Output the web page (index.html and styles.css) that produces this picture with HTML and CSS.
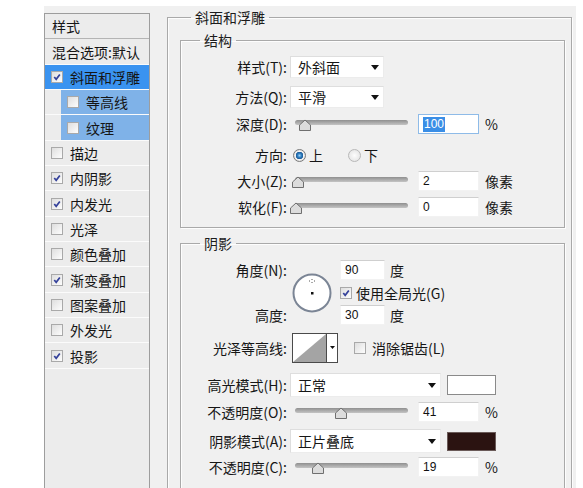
FILE: index.html
```html
<!DOCTYPE html>
<html lang="zh">
<head>
<meta charset="utf-8">
<link rel="stylesheet" href="styles.css">
</head>
<body>
<div class="dialog">
  <div class="styles-list">
    <div class="row head">样式</div>
    <div class="row blend">混合选项:默认</div>
    <div class="row item selected"><span class="cb checked"><svg viewBox="0 0 11 11"><path d="M2.5 5.5 L4.6 8 L8.6 2.8"/></svg></span>斜面和浮雕</div>
    <div class="row sub"><div class="subhl"><span class="cb"></span>等高线</div></div>
    <div class="row sub"><div class="subhl"><span class="cb"></span>纹理</div></div>
    <div class="row item"><span class="cb"></span>描边</div>
    <div class="row item"><span class="cb checked"><svg viewBox="0 0 11 11"><path d="M2.5 5.5 L4.6 8 L8.6 2.8"/></svg></span>内阴影</div>
    <div class="row item"><span class="cb checked"><svg viewBox="0 0 11 11"><path d="M2.5 5.5 L4.6 8 L8.6 2.8"/></svg></span>内发光</div>
    <div class="row item"><span class="cb"></span>光泽</div>
    <div class="row item"><span class="cb"></span>颜色叠加</div>
    <div class="row item"><span class="cb checked"><svg viewBox="0 0 11 11"><path d="M2.5 5.5 L4.6 8 L8.6 2.8"/></svg></span>渐变叠加</div>
    <div class="row item"><span class="cb"></span>图案叠加</div>
    <div class="row item"><span class="cb"></span>外发光</div>
    <div class="row item"><span class="cb checked"><svg viewBox="0 0 11 11"><path d="M2.5 5.5 L4.6 8 L8.6 2.8"/></svg></span>投影</div>
  </div>

  <div class="main">
    <fieldset class="group outer">
      <legend>斜面和浮雕</legend>

      <fieldset class="group inner structure">
        <legend>结构</legend>
        <div class="frow r-select first">
          <span class="lbl">样式(T):</span>
          <div class="select w-small"><span>外斜面</span><i class="arrow"></i></div>
        </div>
        <div class="frow r-select gap8">
          <span class="lbl">方法(Q):</span>
          <div class="select w-small"><span>平滑</span><i class="arrow"></i></div>
        </div>
        <div class="frow gap6">
          <span class="lbl">深度(D):</span>
          <div class="slider"><div class="track"></div><svg class="thumb" style="left:8px" viewBox="0 0 14 13"><path d="M1.5 6 L7 1 L12.5 6 L12.5 11.5 L1.5 11.5 Z"/></svg></div>
          <div class="num focused"><span class="sel">100</span></div>
          <span class="unit">%</span>
        </div>
        <div class="frow gap11">
          <span class="lbl">方向:</span>
          <span class="radio on"></span><span class="ropt">上</span>
          <span class="radio off"></span><span class="ropt">下</span>
        </div>
        <div class="frow gap6">
          <span class="lbl">大小(Z):</span>
          <div class="slider"><div class="track"></div><svg class="thumb" style="left:1px" viewBox="0 0 14 13"><path d="M1.5 6 L7 1 L12.5 6 L12.5 11.5 L1.5 11.5 Z"/></svg></div>
          <div class="num">2</div>
          <span class="unit">像素</span>
        </div>
        <div class="frow gap6">
          <span class="lbl">软化(F):</span>
          <div class="slider"><div class="track"></div><svg class="thumb" style="left:-1px" viewBox="0 0 14 13"><path d="M1.5 6 L7 1 L12.5 6 L12.5 11.5 L1.5 11.5 Z"/></svg></div>
          <div class="num">0</div>
          <span class="unit">像素</span>
        </div>
      </fieldset>

      <fieldset class="group inner shadow">
        <legend>阴影</legend>
        <div class="angle-grid">
          <span class="lbl g-l1">角度(N):</span>
          <svg class="dial" viewBox="0 0 40 40">
            <circle cx="20" cy="20" r="18.5" fill="#fff" stroke="#7b8595" stroke-width="2"/>
            <path d="M20 6 V7 M20 9 V10 M17 8 H18 M22 8 H23" stroke="#555" stroke-width="1"/>
            <rect x="19" y="19" width="2.5" height="2.5" fill="#111"/>
          </svg>
          <div class="g-r1"><div class="num short">90</div><span class="unit u5">度</span></div>
          <div class="g-r2"><span class="cb checked"><svg viewBox="0 0 11 11"><path d="M2.5 5.5 L4.6 8 L8.6 2.8"/></svg></span><span class="cbl">使用全局光(G)</span></div>
          <span class="lbl g-l3">高度:</span>
          <div class="g-r3"><div class="num short">30</div><span class="unit u5">度</span></div>
        </div>
        <div class="frow contour-row">
          <span class="lbl">光泽等高线:</span>
          <svg class="contour" viewBox="0 0 46 30">
            <rect x="0.5" y="0.5" width="45" height="29" fill="#fff" stroke="#4a4a4a"/>
            <polygon points="1,29 34,1 34,29" fill="#a4a4a4"/>
            <line x1="34.5" y1="1" x2="34.5" y2="29" stroke="#4a4a4a"/>
            <polygon points="38,13 43,13 40.5,16" fill="#111"/>
          </svg>
          <span class="cb aa"></span><span class="cbl">消除锯齿(L)</span>
        </div>
        <div class="frow r-mode gap10">
          <span class="lbl">高光模式(H):</span>
          <div class="select w-wide"><span>正常</span><i class="arrow"></i></div>
          <div class="swatch white"></div>
        </div>
        <div class="frow gap5">
          <span class="lbl">不透明度(O):</span>
          <div class="slider"><div class="track"></div><svg class="thumb" style="left:44px" viewBox="0 0 14 13"><path d="M1.5 6 L7 1 L12.5 6 L12.5 11.5 L1.5 11.5 Z"/></svg></div>
          <div class="num">41</div>
          <span class="unit">%</span>
        </div>
        <div class="frow r-mode gap7">
          <span class="lbl">阴影模式(A):</span>
          <div class="select w-wide"><span>正片叠底</span><i class="arrow"></i></div>
          <div class="swatch dark"></div>
        </div>
        <div class="frow gap4">
          <span class="lbl">不透明度(C):</span>
          <div class="slider"><div class="track"></div><svg class="thumb" style="left:21px" viewBox="0 0 14 13"><path d="M1.5 6 L7 1 L12.5 6 L12.5 11.5 L1.5 11.5 Z"/></svg></div>
          <div class="num">19</div>
          <span class="unit">%</span>
        </div>
      </fieldset>
    </fieldset>
  </div>
</div>
</body>
</html>
```

FILE: styles.css
```css
* { box-sizing: border-box; }

body {
  margin: 0;
  background: #ffffff;
  font-family: "Noto Sans CJK SC", "Noto Sans", sans-serif;
  font-size: 14px;
  color: #161616;
}

.dialog {
  display: flex;
  margin: 6px 0 0 44px;
  width: 532px;
  height: 482px;
  background: #f0f0f0;
  overflow: hidden;
}

/* ---------- left list ---------- */
.styles-list {
  flex: none;
  margin-top: 7px;
  width: 106px;
  height: 520px;
  border: 1px solid #9d9d9d;
  background: #ececec;
}

.row {
  display: flex;
  align-items: center;
  height: 25.35px;
  border-bottom: 1px solid #fbfbfb;
  line-height: 16px;
  white-space: nowrap;
}

.head { padding-left: 7px; border-bottom-color: #b4b4b4; }
.blend { padding-left: 7px; }
.item { padding-left: 6px; }
.selected { background: #3a93f0; }

.sub { padding-left: 16px; align-items: stretch; }
.subhl {
  flex: 1;
  display: flex;
  align-items: center;
  padding-left: 6px;
  background: #7fb2e8;
}

.cb {
  flex: none;
  display: inline-block;
  width: 12px;
  height: 12px;
  margin-right: 7px;
  border: 1px solid #a9a9a9;
  background: linear-gradient(135deg, #dedede, #fdfdfd);
}
.cb svg { display: block; width: 10px; height: 10px; }
.cb svg path { fill: none; stroke: #34419a; stroke-width: 1.9; }

/* ---------- right side ---------- */
.main {
  flex: 1;
  padding-left: 17px;
}

fieldset.group {
  margin: 0;
  padding: 0;
  min-width: 0;
  border: 1px solid #a9a9a9;
  box-shadow: inset 1px 1px 0 #fdfdfd, 1px 1px 0 #fdfdfd;
}

fieldset.group > legend {
  padding: 0 4px;
  line-height: 16px;
  font-size: 14px;
  color: #1c1c1c;
}

.outer {
  margin-top: 3px !important;
  width: 405px;
  height: 520px;
  border-bottom: none !important;
  padding: 0 6px 0 12px !important;
}
.outer > legend { margin-left: 11px; }

.inner { margin-top: 7px !important; }
.inner > legend { margin-left: 19px; }

.structure { padding: 8px 0 10px 0 !important; }

.shadow {
  height: 300px;
  border-bottom: none !important;
  padding-top: 9px !important;
}

.frow {
  display: flex;
  align-items: center;
  height: 20px;
  white-space: nowrap;
}
.r-select { height: 22px; }
.r-mode { height: 24px; }

.gap4 { margin-top: 4px; }
.gap5 { margin-top: 5px; }
.gap6 { margin-top: 6px; }
.gap7 { margin-top: 7px; }
.gap8 { margin-top: 8px; }
.gap10 { margin-top: 10px; }
.gap11 { margin-top: 11px; }

.lbl {
  flex: none;
  width: 106px;
  margin-right: 3px;
  text-align: right;
  line-height: 16px;
}

/* dropdown */
.select {
  position: relative;
  display: flex;
  align-items: center;
  height: 100%;
  padding-left: 7px;
  background: #ffffff;
  border: 1px solid #dedede;
  border-right-color: #ececec;
  border-bottom-color: #ececec;
}
.w-small { width: 94px; }
.w-wide { width: 151px; }
.arrow {
  position: absolute;
  right: 4px;
  top: 50%;
  margin-top: -2px;
  width: 0;
  height: 0;
  border-left: 4px solid transparent;
  border-right: 4px solid transparent;
  border-top: 5px solid #111;
}

/* slider */
.slider {
  position: relative;
  flex: none;
  width: 122px;
  height: 20px;
}
.track {
  position: absolute;
  left: 5px;
  top: 6px;
  width: 113px;
  height: 5px;
  border-radius: 3px;
  background: linear-gradient(#8f8f8f, #c4c4c4);
}
.thumb {
  position: absolute;
  top: 5px;
  width: 14px;
  height: 13px;
}
.thumb path { fill: #dcdcdc; stroke: #6f6f6f; stroke-width: 1; }

/* number input */
.num {
  flex: none;
  display: flex;
  align-items: center;
  width: 61px;
  height: 20px;
  margin-left: 6px;
  padding-left: 4px;
  background: #ffffff;
  border: 1px solid #f2f2f2;
  border-top-color: #cfcfcf;
  font-family: "Liberation Sans", Arial, sans-serif;
  font-size: 12px;
  color: #111;
}
.num.focused { border: 1px solid #8ebbe8; }
.num .sel {
  background: #3a8ee6;
  color: #ffffff;
  padding: 0 1px;
  line-height: 15px;
}
.num.short { width: 45px; margin-left: 0; }

.unit {
  margin-left: 6px;
  line-height: 16px;
}
.unit.u5 { margin-left: 5px; }

/* radio */
.radio {
  flex: none;
  display: inline-block;
  width: 13px;
  height: 13px;
  border-radius: 50%;
  margin-left: 3px;
}
.radio.on {
  border: 1px solid #7a7a7a;
  background: radial-gradient(circle, #9fd0f5 0, #2f7fc0 2px, #1c5a98 3.5px, #f4f4f4 4px, #dadada 6px);
}
.radio.off {
  margin-left: 25px;
  border: 1px solid #b8b8b8;
  background: radial-gradient(circle, #fdfdfd 0, #e6e6e6 6px);
}
.ropt { margin-left: 3px; line-height: 16px; }

/* angle */
.angle-grid {
  display: grid;
  grid-template-columns: 106px 47px auto;
  grid-template-rows: 20px 25px 20px;
  column-gap: 3px;
  align-items: center;
}
.angle-grid .lbl { margin-right: 0; }
.g-l1 { grid-column: 1; grid-row: 1; }
.g-l3 { grid-column: 1; grid-row: 3; }
.dial {
  grid-column: 2;
  grid-row: 1 / 4;
  width: 40px;
  height: 40px;
  margin-left: 2px;
}
.g-r1, .g-r2, .g-r3 {
  grid-column: 3;
  display: flex;
  align-items: center;
  height: 20px;
}
.g-r1 { grid-row: 1; }
.g-r2 { grid-row: 2; }
.g-r3 { grid-row: 3; }
.g-r2 .cb { margin-right: 4px; }
.cbl { line-height: 16px; }

.contour-row { height: 30px; margin-top: 8px; }
.contour { flex: none; width: 46px; height: 30px; margin-left: 2px; }
.cb.aa { margin-left: 16px; margin-right: 6px; }

/* swatches */
.swatch {
  flex: none;
  width: 49px;
  height: 20px;
  margin-left: 6px;
  border: 1px solid #8a8a8a;
}
.swatch.white { background: #ffffff; }
.swatch.dark { height: 19px; background: #2b1311; border-color: #6a5a58; }
```
